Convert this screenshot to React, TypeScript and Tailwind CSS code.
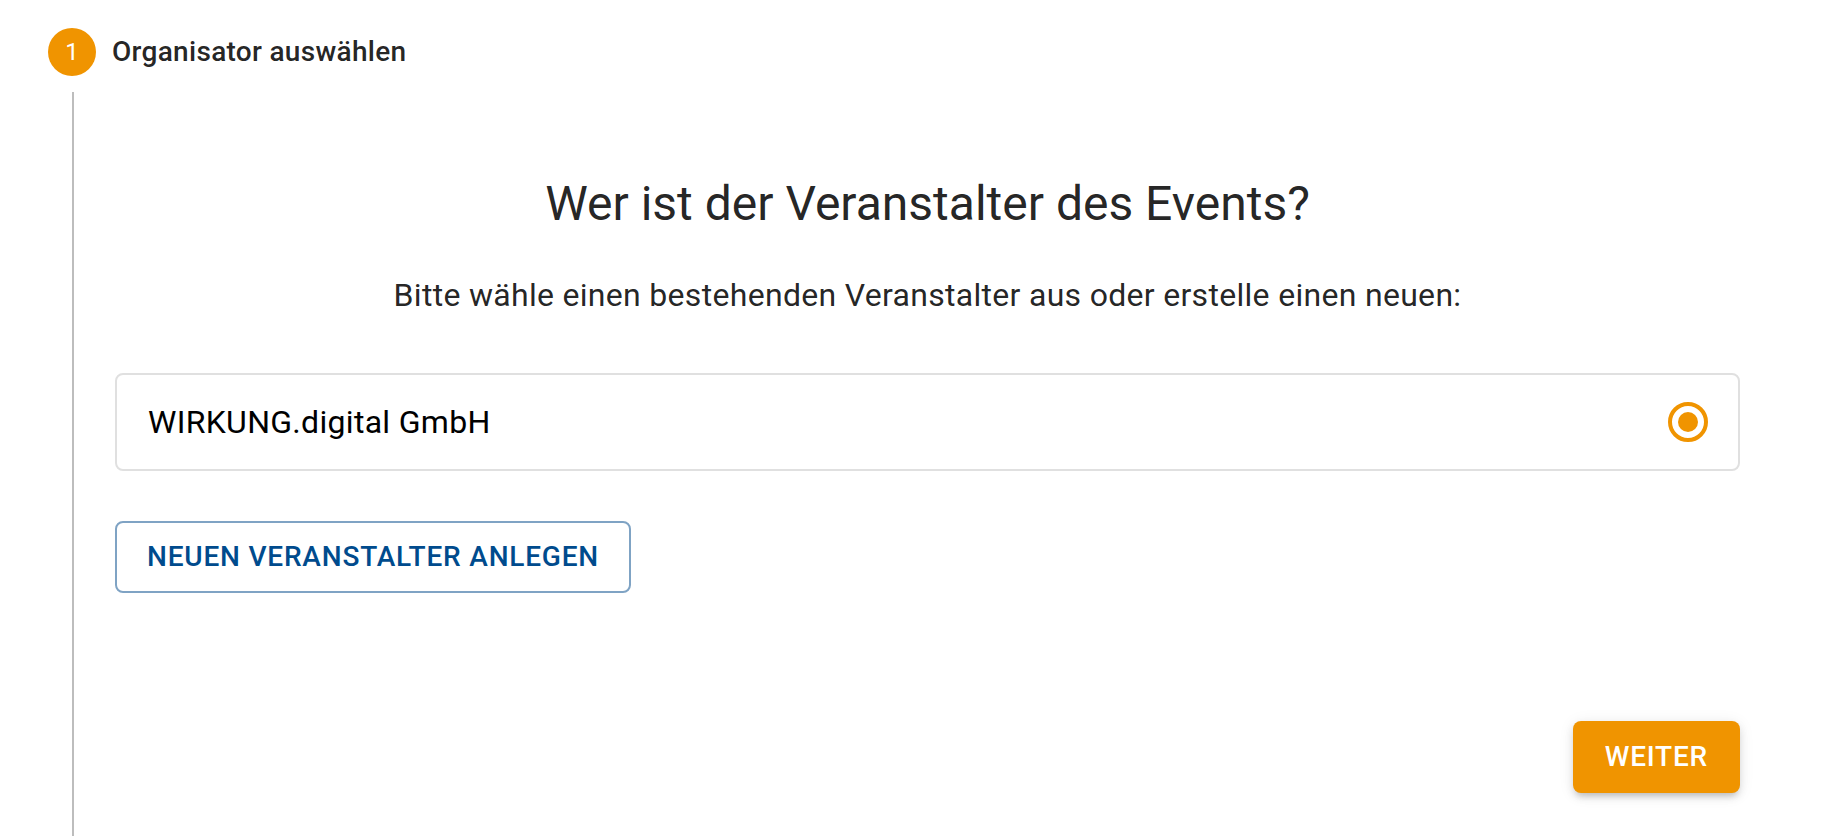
import React from "react";

export default function App() {
  return (
    <div className="min-h-[836px] bg-white pl-[48px] pt-[28px] pr-[82px] font-[Roboto,sans-serif]">
      <div className="flex items-center gap-[16px]">
        <div className="flex h-[48px] w-[48px] items-center justify-center rounded-full bg-[#f09400] text-[24px] leading-none text-white">
          1
        </div>
        <span className="text-[28px] font-medium leading-[40px] tracking-[0.3px] text-[rgba(0,0,0,0.87)]">
          Organisator auswählen
        </span>
      </div>
      <div className="ml-[24px] mt-[16px] flex h-[744px] flex-col border-l-2 border-[#bdbdbd] pl-[41px]">
        <h2 className="mt-[80px] text-center text-[48px] font-normal leading-[64px] text-[rgba(0,0,0,0.87)]">
          Wer ist der Veranstalter des Events?
        </h2>
        <p className="mt-[35px] text-center text-[32px] leading-[48px] tracking-[0.3px] text-[rgba(0,0,0,0.87)]">
          Bitte wähle einen bestehenden Veranstalter aus oder erstelle einen neuen:
        </p>
        <div className="mt-[54px] flex h-[98px] items-center justify-between rounded-[8px] border-2 border-[#e0e0e0] pl-[31px] pr-[30px]">
          <span className="text-[32px] leading-[48px] tracking-[0.3px] text-black">WIRKUNG.digital GmbH</span>
          <svg width="40" height="40" viewBox="0 0 40 40" aria-hidden="true">
            <circle cx="20" cy="20" r="18" fill="none" stroke="#f09400" strokeWidth="4" />
            <circle cx="20" cy="20" r="10" fill="#f09400" />
          </svg>
        </div>
        <button className="mt-[50px] flex h-[72px] items-center self-start rounded-[8px] border-2 border-[#7fa3c4] bg-white px-[30px] text-[28px] font-medium uppercase leading-none tracking-[0.8px] text-[#004b8d]">
          Neuen Veranstalter anlegen
        </button>
        <button className="mt-[128px] flex h-[72px] items-center self-end rounded-[8px] bg-[#f09400] px-[32px] text-[28px] font-medium uppercase leading-none tracking-[0.8px] text-white shadow-[0_6px_6px_-4px_rgba(0,0,0,0.16),0_4px_8px_0_rgba(0,0,0,0.1),0_2px_16px_0_rgba(0,0,0,0.08)]">
          Weiter
        </button>
      </div>
    </div>
  );
}
